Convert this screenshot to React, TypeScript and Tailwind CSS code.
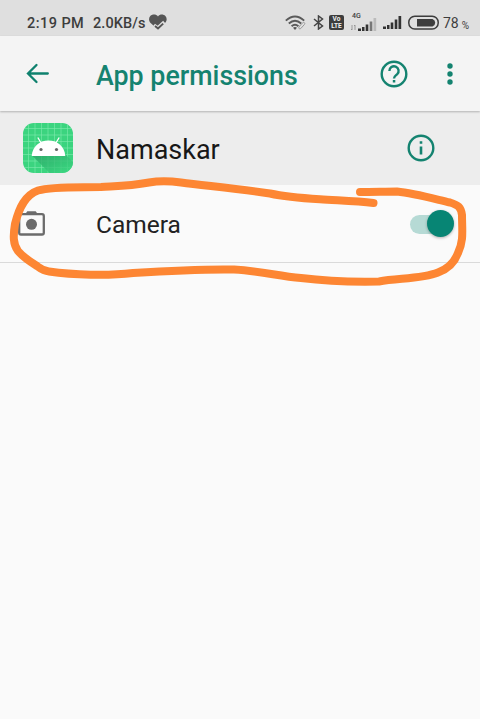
function HeartCheck() {
  return (
    <svg className="ml-[3px] h-[17px] w-[18px] shrink-0" viewBox="0 0 18 17" fill="none">
      <path d="M9 2.400C7.200 0 3.300-.200 1.300 2-.600 4.200-.200 7.300 1.600 9L5 12 9 13 16.200 8.700C18 6.900 18.200 4 16.400 2 14.300-.200 10.800 0 9 2.400Z" fill="#555" />
      <path d="M5 11 8.800 13.800 15.200 8" stroke="#dfdfdf" strokeWidth="3.200" />
      <path d="M6 12 9 14.500 14.200 9.600" stroke="#555" strokeWidth="1.900" />
    </svg>
  );
}

function Wifi() {
  return (
    <svg className="h-[16px] w-[22px] shrink-0" viewBox="0 0 22 16" fill="none" stroke="#5a5a5a" strokeWidth="1.900">
      <path d="M.8 5.600Q10 -2.600 19.200 5.600" />
      <path d="M3.800 8.500Q10 2.900 16.200 8.500" />
      <path d="M6.600 11.200Q10 8.100 13.400 11.200" />
      <path d="M8 12.700Q10 11.100 12 12.700L10 15Z" fill="#555" stroke="none" />
      <path d="m14.700 11 2.900-3.200q1-.8 1.800-.1.800.8.100 1.700l-3.700 4.100q-1 .8-1.700.1-.8-.8 0-1.600Z" fill="#dfdfdf" stroke="#999" strokeWidth="1" />
    </svg>
  );
}

function Bars({ faded = false }: { faded?: boolean }) {
  return (
    <svg className="h-[13px] w-[19px] shrink-0" viewBox="0 0 19 13" fill="#333">
      <path d="M0 10.500h3V13H0zM4 9h2.500v4H4zM7.700 6.500h2.600V13H7.700z" />
      <path d="M11.700 3.500h2.600V13h-2.600z" fill={faded ? "#777" : "#333"} />
      <path d="M15.500 0h2.700v13h-2.700z" fill={faded ? "#bbb" : "#333"} />
    </svg>
  );
}

function StatusBar() {
  return (
    <div className="flex h-9 shrink-0 items-center bg-[#dfdfdf] pl-[27px] pt-[9px] text-[#3d3d3d]">
      <span className="w-[66px] whitespace-nowrap pt-[2px] text-[14.500px] font-medium leading-4 tracking-[0.450px]">2:19 PM</span>
      <span className="w-[53px] whitespace-nowrap pt-[2px] text-[14.500px] font-medium leading-4 tracking-[0.100px]">2.0KB/s</span>
      <HeartCheck />
      <div className="ml-[118px] flex w-[195px] items-center">
        <Wifi />
        <svg className="ml-[6px] h-[15px] w-[11px] shrink-0" viewBox="0 0 11 15" fill="none" stroke="#444" strokeWidth="1.500">
          <path d="m1 4 8.500 7-4 3V1l4 3L1 11" />
        </svg>
        <div className="ml-[5px] flex h-[15px] w-[15px] shrink-0 flex-col items-center justify-center gap-[1px] rounded-[2px] bg-[#3d3d3d] text-[6.500px] font-bold leading-[6px] text-[#f0f0f0]">
          <span className="block h-[6px] leading-[6px]">Vo</span>
          <span className="block h-[6px] leading-[6px]">LTE</span>
        </div>
        <div className="ml-[7px] flex h-[18px] w-[26px] shrink-0 flex-col">
          <span className="pl-[1px] text-[7px] font-medium leading-[5px]">4G</span>
          <div className="flex items-end">
            <svg className="mb-[1px] h-[5px] w-[5px] shrink-0" viewBox="0 0 5 5" fill="none" stroke="#888" strokeWidth=".8"><path d="M1 0v5M0 4l1 1M4 5V0M3 1l1-1" /></svg>
            <div className="-mt-[1px] ml-[2px]"><Bars faded /></div>
          </div>
        </div>
        <div className="ml-[6px]"><Bars /></div>
        <svg className="ml-[6px] h-[15px] w-[31px] shrink-0" viewBox="0 0 31 15" fill="none">
          <rect x=".8" y="1.300" width="29.400" height="12.800" rx="6" stroke="#3d3d3d" strokeWidth="1.500" />
          <path d="M9 4h15.500q2.700 1 2.700 3.700t-2.700 3.800H9Z" fill="#3d3d3d" />
        </svg>
        <span className="ml-[4px] pt-[1px] text-[14px] leading-4">78</span>
        <span className="ml-[3px] pt-[7px] text-[10px] leading-[10px]">%</span>
      </div>
    </div>
  );
}

function AndroidIcon() {
  return (
    <svg className="h-[50px] w-[50px] shrink-0" viewBox="0 0 50 50">
      <defs>
        <clipPath id="tile"><rect width="50" height="50" rx="11" /></clipPath>
        <linearGradient id="shade" x1="0" y1="0" x2="1" y2="1">
          <stop stopColor="#269c60" /><stop offset="1" stopColor="#3ddc84" />
        </linearGradient>
      </defs>
      <g clipPath="url(#tile)">
        <rect width="50" height="50" fill="#3bd47f" />
        <path d="M5.500 0v50M12 0v50M18.500 0v50M25 0v50M31.500 0v50M38 0v50M44.500 0v50M0 5.500h50M0 12h50M0 18.500h50M0 25h50M0 31.500h50M0 38h50M0 44.500h50" stroke="#80ebae" strokeWidth=".6" />
        <path d="M9 32.500 27 50.500H50V39L42 31Z" fill="url(#shade)" opacity=".75" />
        <path d="M8.700 33C9.500 23.500 16.200 17.500 25.500 17.500S41.500 23.500 42.300 33Z" fill="#fff" />
        <path d="m14.800 14.500 3.600 6M36.200 14.500l-3.600 6" stroke="#fff" strokeWidth="1.300" />
        <circle cx="18" cy="26.500" r="1.600" fill="#666" /><circle cx="33.500" cy="26.500" r="1.600" fill="#666" />
      </g>
    </svg>
  );
}

function Header() {
  return (
    <header className="z-10 flex h-[75px] shrink-0 items-center bg-[#f4f4f4] shadow-[0_1px_2px_rgba(0,0,0,0.25)]">
      <svg className="ml-[26px] h-[22px] w-[24px] shrink-0" viewBox="0 0 24 22" fill="none" stroke="#0f816e" strokeWidth="2.300" strokeLinecap="round">
        <path d="M21.800 10.500H2.300M10.500 2 2 10.500l8.500 8.500" />
      </svg>
      <h1 className="ml-[46px] w-[284px] whitespace-nowrap pt-[4px] text-[26.800px] font-medium leading-8 text-[#148370]">App permissions</h1>
      <svg className="h-[28px] w-[28px] shrink-0" viewBox="0 0 28 28" fill="none" stroke="#148370" strokeWidth="2.400">
        <circle cx="14" cy="14" r="12.300" />
        <path d="M9.400 11a4.600 4.600 0 1 1 7.800 3.200c-1.800 1.600-3.200 2.100-3.200 4.300" />
        <path d="M12.800 20h2.500v2.500h-2.500z" fill="#148370" stroke="none" />
      </svg>
      <svg className="ml-[39px] h-[24px] w-[6px] shrink-0" viewBox="0 0 6 24" fill="#148370">
        <circle cx="3" cy="4" r="2.700" /><circle cx="3" cy="12" r="2.700" /><circle cx="3" cy="20" r="2.700" />
      </svg>
    </header>
  );
}

function Switch() {
  return (
    <div className="relative h-7 w-11 shrink-0">
      <div className="absolute left-0 top-[5px] h-[19px] w-9 rounded-full bg-[#b6dad5]" />
      <div className="absolute right-0 top-[.5px] h-[27px] w-[27px] rounded-full bg-[#078574] shadow-[0_1px_3px_rgba(0,0,0,0.3)]" />
    </div>
  );
}

export default function App() {
  return (
    <main className="relative flex h-[719px] w-[480px] flex-col overflow-hidden bg-[#fafafa] font-['Roboto',sans-serif]">
      <StatusBar />
      <Header />
      <section className="flex h-[74px] shrink-0 items-center bg-[#ededed] pl-[23px]">
        <AndroidIcon />
        <span className="ml-[23px] w-[311px] pt-[3px] text-[27px] leading-8 text-[#171717]">Namaskar</span>
        <svg className="h-[28px] w-[28px] shrink-0" viewBox="0 0 28 28" fill="none">
          <circle cx="14" cy="14" r="12.300" stroke="#148370" strokeWidth="2.400" />
          <path d="M12.700 7.200h2.600v2.600h-2.600zM12.700 12.500h2.600v8h-2.600z" fill="#148370" />
        </svg>
      </section>
      <section className="flex h-[78px] shrink-0 items-center border-b border-[#dadada] pl-[18px]">
        <svg className="h-[25px] w-[27px] shrink-0" viewBox="0 0 27 25" fill="none">
          <path d="M7 3.500 9.300.300h8.400L20 3.500Z" fill="#6b6b6b" />
          <rect x="1.200" y="3.200" width="24.600" height="20.300" rx="1.800" stroke="#6b6b6b" strokeWidth="2.300" />
          <circle cx="13.500" cy="13.300" r="5.500" fill="#6b6b6b" />
        </svg>
        <span className="ml-[51px] w-[314px] pt-[3px] text-[24.500px] leading-8 text-[#222]">Camera</span>
        <Switch />
      </section>
      <svg className="pointer-events-none absolute inset-0 z-20 h-[719px] w-[480px]" viewBox="0 0 480 719" fill="none" stroke="#fd8633" strokeWidth="8" strokeLinecap="round" strokeLinejoin="round">
        <path d="M373.500 203C355 201 337 200.500 320 199.300C300 198 286 197 270 193.500C242 189 209 186 181 182.500Q163 180 149 182.500C130 186 118 186 101 187C80 187.500 52 186 38 190.500C25 195 19 208 15 224C13 236 13 244 18 251Q24 258 37 266C41 269 43 271 49 271.500C73 275 108 276 133 273C164 271 201 269 234 269.500C261 271 278 276 301 278C325 281 354 282 379 281.500C399 278 422 279 438 272.500C450 268 455 261 458 253C464 240 462 231 462 215C461 207 458 205 450 202.500C431 198 413 193 397 191.500C386 191.500 373 192 360 192" />
      </svg>
    </main>
  );
}
